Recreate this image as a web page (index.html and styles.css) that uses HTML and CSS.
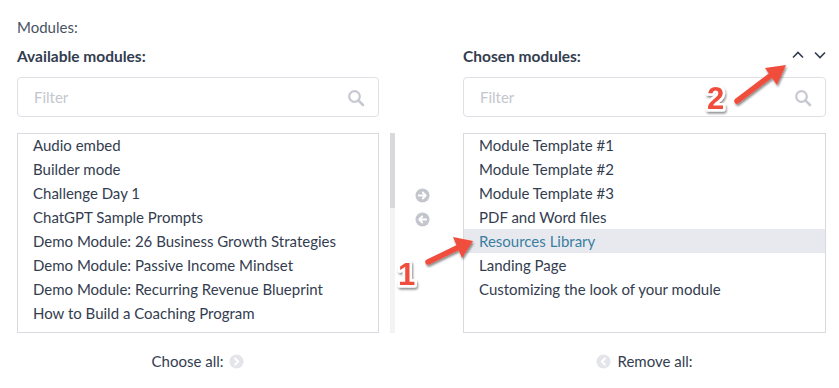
FILE: index.html
```html
<!DOCTYPE html>
<html>
<head>
<meta charset="utf-8">
<link rel="stylesheet" href="styles.css">
</head>
<body>
<div class="page">
  <div class="title">Modules:</div>
  <div class="selector">
    <div class="panel">
      <div class="panel-head"><span class="label">Available modules:</span></div>
      <div class="filter">
        <span class="ph">Filter</span>
        <svg class="search" width="18" height="18" viewBox="0 0 18 18"><circle cx="7.5" cy="7.5" r="5.3" fill="none" stroke="#c6c9d1" stroke-width="2.2"/><line x1="11.4" y1="11.4" x2="16" y2="16" stroke="#c6c9d1" stroke-width="2.6" stroke-linecap="round"/></svg>
      </div>
      <ul class="list">
        <li>Audio embed</li>
        <li>Builder mode</li>
        <li>Challenge Day 1</li>
        <li>ChatGPT Sample Prompts</li>
        <li>Demo Module: 26 Business Growth Strategies</li>
        <li>Demo Module: Passive Income Mindset</li>
        <li>Demo Module: Recurring Revenue Blueprint</li>
        <li>How to Build a Coaching Program</li>
        <li>Lead Magnet Checklist</li>
      </ul>
      <div class="all"><span>Choose all:</span>
        <svg width="15" height="15" viewBox="0 0 16 16"><circle cx="8" cy="8" r="7.5" fill="#e4e5ea"/><path d="M6.6 4.8 L9.8 8 L6.6 11.2" fill="none" stroke="#fff" stroke-width="2.2" stroke-linecap="round" stroke-linejoin="round"/></svg>
      </div>
    </div>
    <div class="middle">
      <div class="scroll"><div class="thumb"></div></div>
      <div class="moves">
        <svg width="15" height="15" viewBox="0 0 16 16"><circle cx="8" cy="8" r="7.5" fill="#c3c6cd"/><path d="M4 8 H11.5 M8.3 4.8 L11.5 8 L8.3 11.2" fill="none" stroke="#fff" stroke-width="1.9" stroke-linecap="round" stroke-linejoin="round"/></svg>
        <svg width="15" height="15" viewBox="0 0 16 16"><circle cx="8" cy="8" r="7.5" fill="#c3c6cd"/><path d="M12 8 H4.5 M7.7 4.8 L4.5 8 L7.7 11.2" fill="none" stroke="#fff" stroke-width="1.9" stroke-linecap="round" stroke-linejoin="round"/></svg>
      </div>
    </div>
    <div class="panel">
      <div class="panel-head"><span class="label">Chosen modules:</span>
        <span class="sort">
          <svg width="14" height="10" viewBox="0 0 14 10"><path d="M2 7.5 L7 2.5 L12 7.5" fill="none" stroke="#333d4f" stroke-width="1.6"/></svg>
          <svg width="14" height="10" viewBox="0 0 14 10"><path d="M2 2.5 L7 7.5 L12 2.5" fill="none" stroke="#333d4f" stroke-width="1.6"/></svg>
        </span>
      </div>
      <div class="filter">
        <span class="ph">Filter</span>
        <svg class="search" width="18" height="18" viewBox="0 0 18 18"><circle cx="7.5" cy="7.5" r="5.3" fill="none" stroke="#c6c9d1" stroke-width="2.2"/><line x1="11.4" y1="11.4" x2="16" y2="16" stroke="#c6c9d1" stroke-width="2.6" stroke-linecap="round"/></svg>
      </div>
      <ul class="list">
        <li>Module Template #1</li>
        <li>Module Template #2</li>
        <li>Module Template #3</li>
        <li>PDF and Word files</li>
        <li class="sel">Resources Library</li>
        <li>Landing Page</li>
        <li>Customizing the look of your module</li>
      </ul>
      <div class="all">
        <svg width="15" height="15" viewBox="0 0 16 16"><circle cx="8" cy="8" r="7.5" fill="#e4e5ea"/><path d="M9.4 4.8 L6.2 8 L9.4 11.2" fill="none" stroke="#fff" stroke-width="2.2" stroke-linecap="round" stroke-linejoin="round"/></svg>
        <span>Remove all:</span>
      </div>
    </div>
  </div>

  <svg class="note note1" width="90" height="60" viewBox="0 0 90 60">
    <defs><filter id="sh1" x="-50%" y="-50%" width="200%" height="200%"><feDropShadow dx="1" dy="2" stdDeviation="1" flood-color="#000" flood-opacity="0.45"/></filter></defs>
    <g filter="url(#sh1)">
      <line x1="35" y1="31" x2="66" y2="16" stroke="#f04e3e" stroke-width="5.5" stroke-linecap="round"/>
      <polygon points="80,10 60,6 69,27" fill="#f04e3e"/>
    </g>
    <text x="5" y="54" class="num" filter="url(#sh1)">1</text>
  </svg>

  <svg class="note note2" width="95" height="60" viewBox="0 0 95 60">
    <g filter="url(#sh1)">
      <line x1="33" y1="44" x2="66" y2="19" stroke="#f04e3e" stroke-width="5.5" stroke-linecap="round"/>
      <polygon points="82,8 61,11 73,28" fill="#f04e3e"/>
    </g>
    <text x="3" y="52" class="num" filter="url(#sh1)">2</text>
  </svg>
</div>
</body>
</html>
```

FILE: styles.css
```css
* { box-sizing: border-box; }
html, body { margin: 0; padding: 0; background: #fff; }
body {
  font-family: "Lato", "Noto Sans", sans-serif;
  font-size: 15px;
  color: #333d4f;
}
.page {
  position: relative;
  width: 839px;
  height: 388px;
  padding: 17px 13px 0 17px;
}
.title {
  color: #4a5364;
  line-height: 20px;
  height: 20px;
}
.selector {
  display: grid;
  grid-template-columns: 362px 84px 363px;
  margin-top: 9px;
}
.panel { display: flex; flex-direction: column; }
.panel-head {
  display: flex;
  align-items: center;
  justify-content: space-between;
  height: 20px;
}
.label { font-weight: 700; font-size: 15.5px; }
.sort { display: flex; gap: 8px; margin-right: -1px; margin-top: -2px; }
.filter {
  margin-top: 11px;
  height: 40px;
  border: 1px solid #dfe0e6;
  border-radius: 4px;
  display: flex;
  align-items: center;
  justify-content: space-between;
  padding: 0 13px 0 16px;
}
.ph { color: #c3c6cf; }
.search { margin-top: 2px; }
.list {
  list-style: none;
  margin: 16px 0 0 0;
  padding: 0;
  height: 200px;
  overflow: hidden;
  border: 1px solid #d9dadf;
}
.list li {
  height: 24px;
  line-height: 24px;
  padding-left: 15px;
  white-space: nowrap;
}
.list li:first-child { margin-top: -1px; }
.list li.sel { background: #e8e9ee; color: #3a7fa2; }
.all {
  display: flex;
  justify-content: center;
  align-items: center;
  gap: 6px;
  margin-top: 18px;
  height: 20px;
  color: #333d4f;
}
.middle {
  display: flex;
  padding-top: 87px;
}
.scroll {
  width: 5px;
  height: 200px;
  margin-left: 11px;
  background: #f3f3f4;
}
.thumb { height: 75px; background: #d9d9db; }
.moves {
  display: flex;
  flex-direction: column;
  gap: 9px;
  margin-left: 20px;
  padding-top: 55px;
}
.note { position: absolute; overflow: visible; }
.note1 { left: 393px; top: 231px; }
.note2 { left: 704px; top: 57px; }
.num {
  font-family: "Liberation Sans", sans-serif;
  font-weight: 700;
  font-size: 31px;
  fill: #f04e3e;
  stroke: #fff;
  stroke-width: 5px;
  paint-order: stroke;
  stroke-linejoin: round;
}
```
